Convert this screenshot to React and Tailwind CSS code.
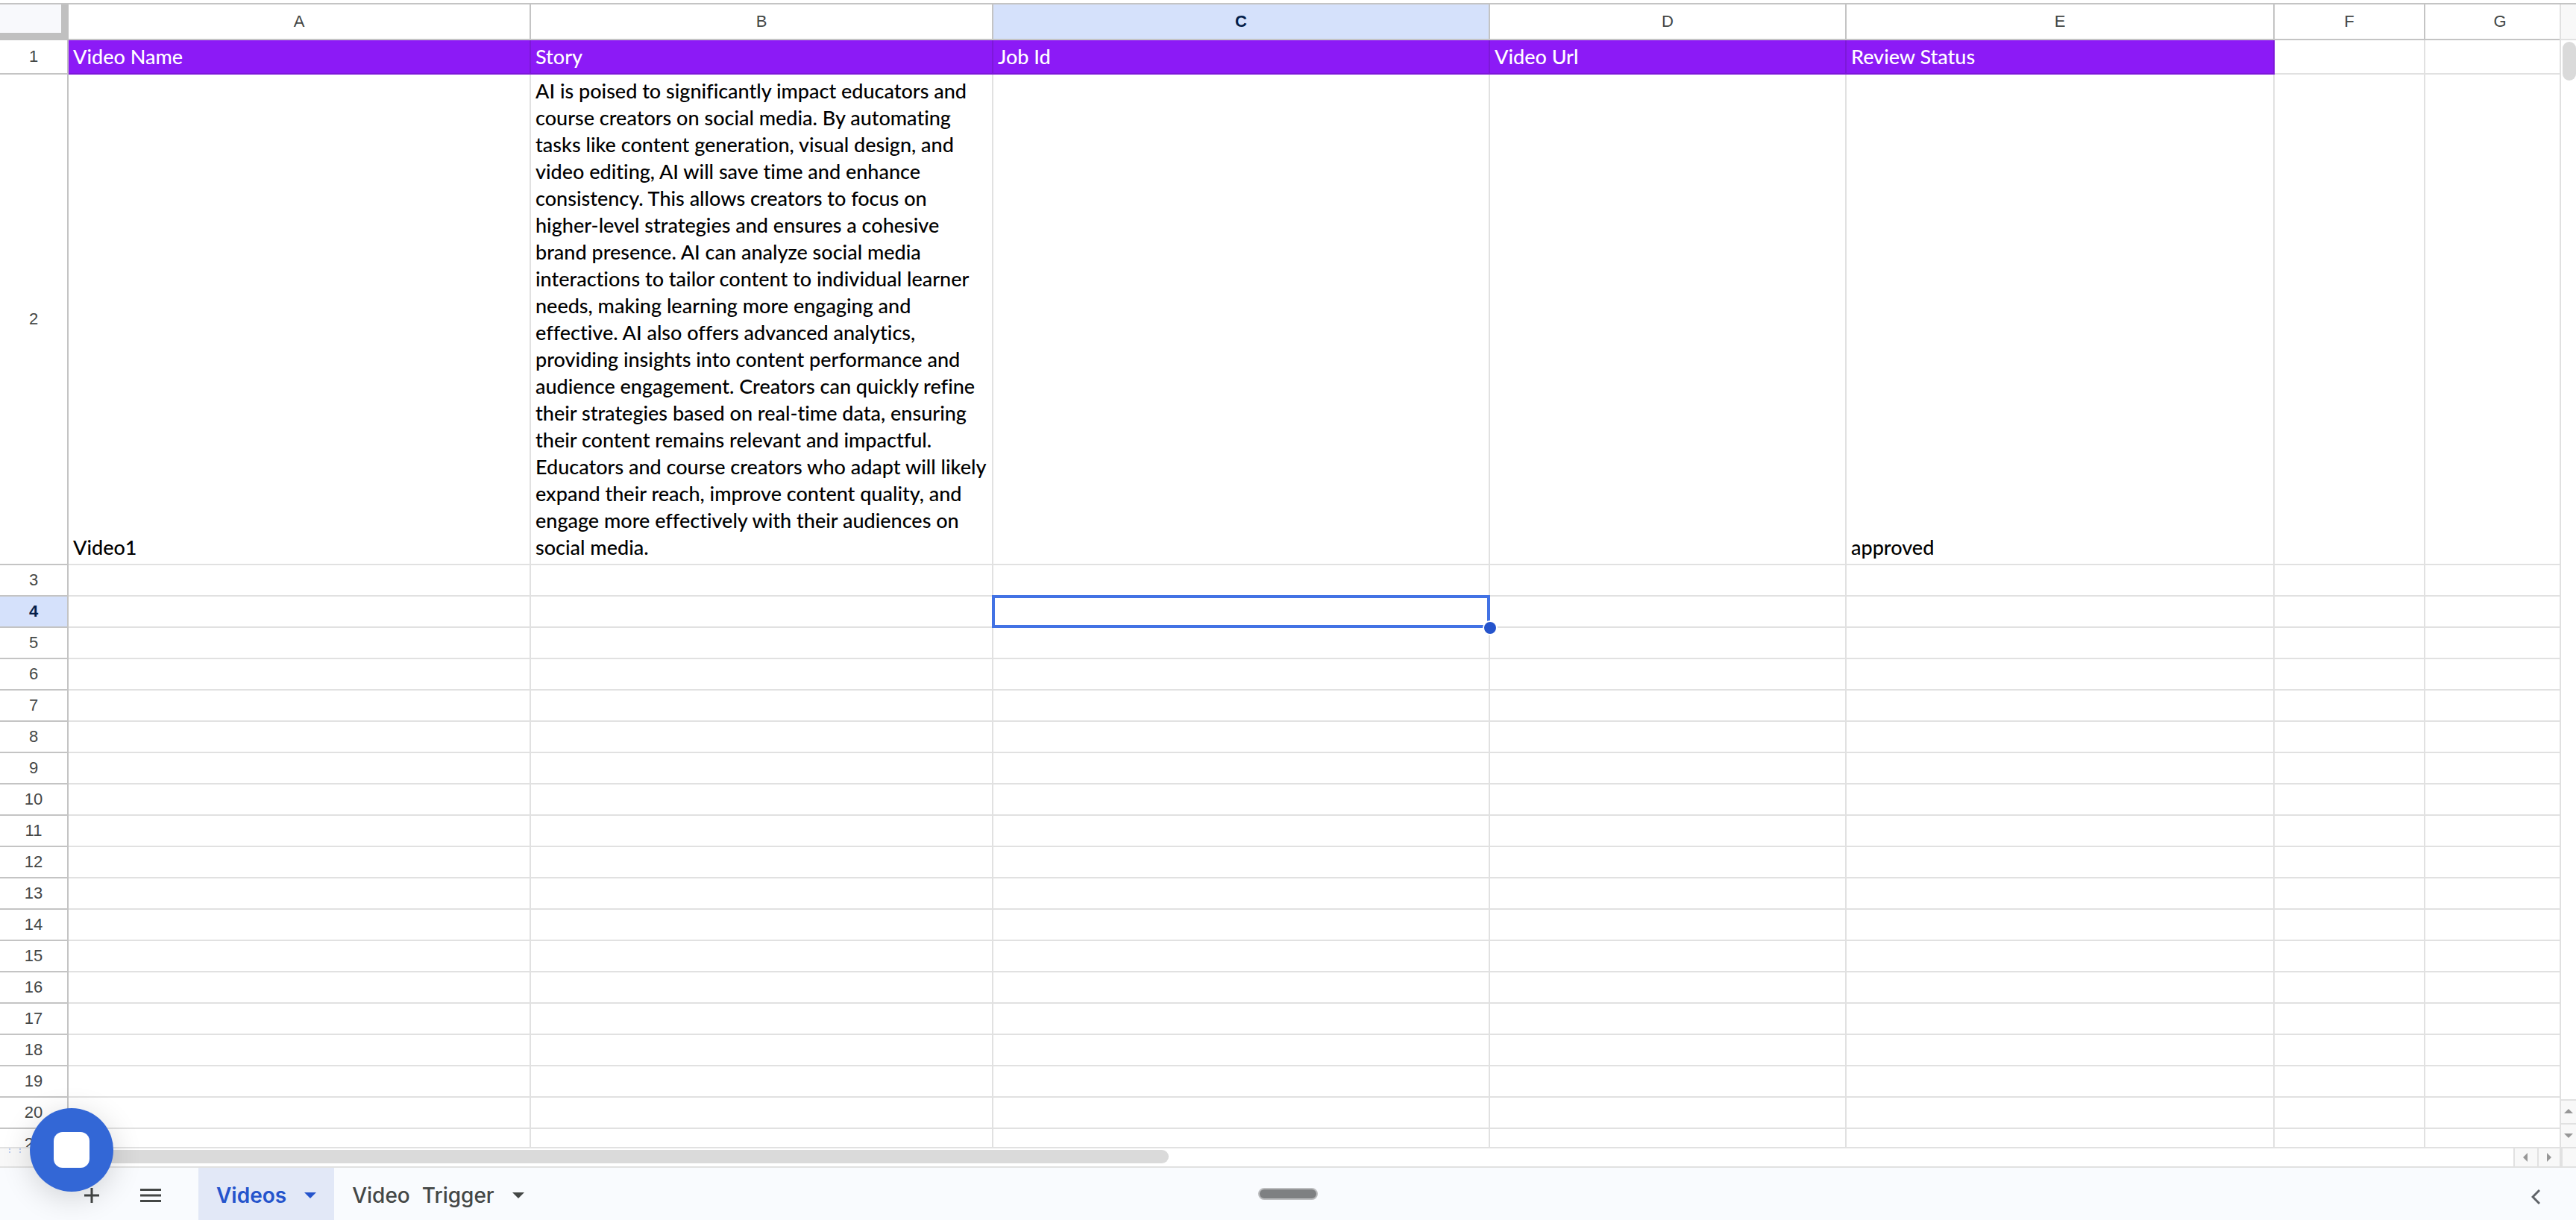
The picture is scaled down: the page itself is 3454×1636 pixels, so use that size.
import React from 'react';

const columns = [
  { id: 'A', className: 'w-[620px]' },
  { id: 'B', className: 'w-[620px]' },
  { id: 'C', className: 'w-[666px]' },
  { id: 'D', className: 'w-[478px]' },
  { id: 'E', className: 'w-[574px]' },
  { id: 'F', className: 'w-[202px]' },
  { id: 'G', className: 'w-[202px]' },
];

const story =
  'AI is poised to significantly impact educators and course creators on social media. By automating tasks like content generation, visual design, and video editing, AI will save time and enhance consistency. This allows creators to focus on higher-level strategies and ensures a cohesive brand presence. AI can analyze social media interactions to tailor content to individual learner needs, making learning more engaging and effective. AI also offers advanced analytics, providing insights into content performance and audience engagement. Creators can quickly refine their strategies based on real-time data, ensuring their content remains relevant and impactful. Educators and course creators who adapt will likely expand their reach, improve content quality, and engage more effectively with their audiences on social media.';

const titles = {
  A: 'Video Name',
  B: 'Story',
  C: 'Job Id',
  D: 'Video Url',
  E: 'Review Status',
};

const records = { 2: { A: 'Video1', B: story, E: 'approved' } };

const selected = { column: 'C', row: 4 };
const rowNumbers = Array.from({ length: 20 }, (_, i) => i + 2);

function Triangle({ points, className }) {
  return (
    <svg viewBox="0 0 12 12" className={className} fill="currentColor" aria-hidden="true">
      <polygon points={points} />
    </svg>
  );
}

function Caret() {
  return (
    <svg viewBox="0 0 16 8" className="h-2 w-4" fill="currentColor" aria-hidden="true">
      <polygon points="0,0 16,0 8,8" />
    </svg>
  );
}

function RowHeader({ number, active }) {
  return (
    <th
      scope="row"
      className={`border-r-2 border-b-2 border-[#c4c4c4] p-0 text-center align-middle font-['Liberation_Sans',sans-serif] text-[22px] leading-6 ${
        active ? 'bg-[#d5e1fb] font-bold text-[#041e49]' : 'bg-white font-normal text-[#444746]'
      }`}
    >
      {number}
    </th>
  );
}

function Cell({ column, row, text }) {
  const active = column === selected.column && row === selected.row;
  return (
    <td
      className={`border-r-2 border-b-2 border-[#e1e1e1] py-0 pr-0 pl-1.5 align-bottom ${
        active ? 'relative z-10' : ''
      }`}
    >
      {text && <p className="pb-1">{text}</p>}
      {active && (
        <>
          <span className="absolute -inset-[2px] border-4 border-[#4272e4]" />
          <span className="absolute -right-3 -bottom-3 size-5 rounded-full border-2 border-white bg-[#2554cc]" />
        </>
      )}
    </td>
  );
}

function Sheet() {
  return (
    <table className="w-[3454px] table-fixed border-separate border-spacing-0 font-[Lato,sans-serif] text-[27px] leading-9 font-medium text-black [font-variant-ligatures:none]">
      <colgroup>
        <col className="w-[92px]" />
        {columns.map((c) => (
          <col key={c.id} className={c.className} />
        ))}
      </colgroup>
      <thead>
        <tr className="h-12">
          <td className="border-r-8 border-b-8 border-[#c0c0c0] bg-[#f8f9fc] p-0 shadow-[inset_-2px_-2px_0_#c0c0c0]" />
          {columns.map((c) => (
            <th
              key={c.id}
              scope="col"
              className={`border-r-2 border-b-2 border-[#c4c4c4] p-0 text-center font-['Liberation_Sans',sans-serif] text-[22px] leading-6 ${
                c.id === selected.column
                  ? 'bg-[#d5e1fb] font-bold text-[#041e49]'
                  : 'bg-white font-normal text-[#444746]'
              }`}
            >
              {c.id}
            </th>
          ))}
        </tr>
      </thead>
      <tbody>
        <tr className="h-[46px]">
          <RowHeader number={1} />
          {columns.map((c) =>
            titles[c.id] ? (
              <td
                key={c.id}
                className="border-r-2 border-b-2 border-[#7d18d9] bg-[#8c1af6] py-0 pr-0 pl-1.5 align-bottom text-white"
              >
                <p className="pb-1">{titles[c.id]}</p>
              </td>
            ) : (
              <Cell key={c.id} column={c.id} row={1} />
            )
          )}
        </tr>
        {rowNumbers.map((n) => (
          <tr key={n} className={n === 2 ? 'h-[658px]' : 'h-[42px]'}>
            <RowHeader number={n} active={n === selected.row} />
            {columns.map((c) => (
              <Cell key={c.id} column={c.id} row={n} text={records[n]?.[c.id]} />
            ))}
          </tr>
        ))}
      </tbody>
    </table>
  );
}

function VerticalScrollbar() {
  return (
    <div className="flex w-[22px] shrink-0 flex-col border-l-2 border-[#e1e1e1] bg-white text-[#979797]">
      <div className="h-12 border-b-2 border-[#e1e1e1] bg-[#f8f8f8]" />
      <div className="flex-1 py-[2px] pl-[2px]">
        <div className="h-[52px] rounded-full bg-[#dadada]" />
      </div>
      <button
        type="button"
        aria-label="Scroll up"
        className="flex h-8 items-center justify-center border-t-2 border-[#e1e1e1] bg-[#f8f8f8]"
      >
        <Triangle points="6,2 12,8 0,8" className="size-3" />
      </button>
      <button
        type="button"
        aria-label="Scroll down"
        className="flex h-8 items-center justify-center border-t-2 border-[#e1e1e1] bg-[#f8f8f8]"
      >
        <Triangle points="0,3 12,3 6,9" className="size-3" />
      </button>
    </div>
  );
}

function HorizontalScrollbar() {
  return (
    <div className="flex h-7 shrink-0 border-t-2 border-b-2 border-[#e1e1e1] bg-white text-[#979797]">
      <div className="flex w-[92px] gap-3 bg-[#f8f8f8] pl-3">
        <span className="h-[6px] border-l-2 border-dotted border-[#bccdf2]" />
        <span className="h-[6px] border-l-2 border-dotted border-[#bccdf2]" />
      </div>
      <div className="flex-1 py-[2px]">
        <div className="h-[18px] w-[45%] rounded-full bg-[#dadada]" />
      </div>
      <button
        type="button"
        aria-label="Scroll left"
        className="flex w-8 items-center justify-center border-l-2 border-[#e1e1e1] bg-[#f8f8f8]"
      >
        <Triangle points="8,0 8,12 2,6" className="size-3" />
      </button>
      <button
        type="button"
        aria-label="Scroll right"
        className="flex w-[30px] items-center justify-center border-l-2 border-[#e1e1e1] bg-[#f8f8f8]"
      >
        <Triangle points="3,0 9,6 3,12" className="size-3" />
      </button>
      <div className="w-[22px] border-l-4 border-[#e1e1e1] bg-[#f8f8f8]" />
    </div>
  );
}

function TabBar() {
  return (
    <nav
      aria-label="Sheets"
      className="flex h-[70px] shrink-0 items-stretch bg-[#f9fbfe] font-[Inter,sans-serif] text-[28px] leading-9 text-[#444746]"
    >
      <div className="flex flex-1 items-stretch">
        <button type="button" aria-label="Add sheet" className="ml-24 flex w-[54px] items-center justify-center pt-1">
          <svg viewBox="0 0 20 20" className="size-5" stroke="currentColor" strokeWidth="3" aria-hidden="true">
            <path d="M10 0v20M0 10h20" />
          </svg>
        </button>
        <button type="button" aria-label="All sheets" className="ml-6 flex w-14 items-center justify-center pt-1">
          <svg viewBox="0 0 28 18" className="h-[18px] w-7" stroke="currentColor" strokeWidth="3" aria-hidden="true">
            <path d="M0 1.5h28M0 9h28M0 16.5h28" />
          </svg>
        </button>
        <button
          type="button"
          className="ml-9 flex items-center gap-6 bg-[#e2e8f7] px-6 pt-1 font-semibold text-[#2554cc]"
        >
          Videos
          <Caret />
        </button>
        <button type="button" className="flex items-center gap-6 px-6 pt-1 font-medium">
          <span className="flex gap-4">
            <span>Video</span>
            <span>Trigger</span>
          </span>
          <Caret />
        </button>
      </div>
      <div className="flex items-center">
        <span className="h-4 w-20 rounded-full border-2 border-[#bcbdbf] bg-[#7e8082]" />
      </div>
      <div className="flex flex-1 items-center justify-end pt-2">
        <button type="button" aria-label="Show side panel" className="mr-12">
          <svg viewBox="0 0 12 20" className="h-5 w-3" fill="none" stroke="#5f6368" strokeWidth="3" aria-hidden="true">
            <path d="M11 1L2 10l9 9" />
          </svg>
        </button>
      </div>
    </nav>
  );
}

export default function App() {
  return (
    <div className="relative flex h-screen flex-col overflow-hidden bg-white pt-1">
      <div className="flex min-h-0 flex-1 border-t-2 border-[#c4c4c4]">
        <div className="min-w-0 flex-1 overflow-hidden">
          <Sheet />
        </div>
        <VerticalScrollbar />
      </div>
      <HorizontalScrollbar />
      <TabBar />

      {/* Floating recorder button */}
      <button
        type="button"
        aria-label="Stop"
        className="absolute bottom-[38px] left-10 flex size-28 items-center justify-center rounded-full bg-[#3367d6] shadow-[0_8px_40px_rgba(0,0,0,0.16)]"
      >
        <span className="size-12 rounded-xl bg-white" />
      </button>
    </div>
  );
}
